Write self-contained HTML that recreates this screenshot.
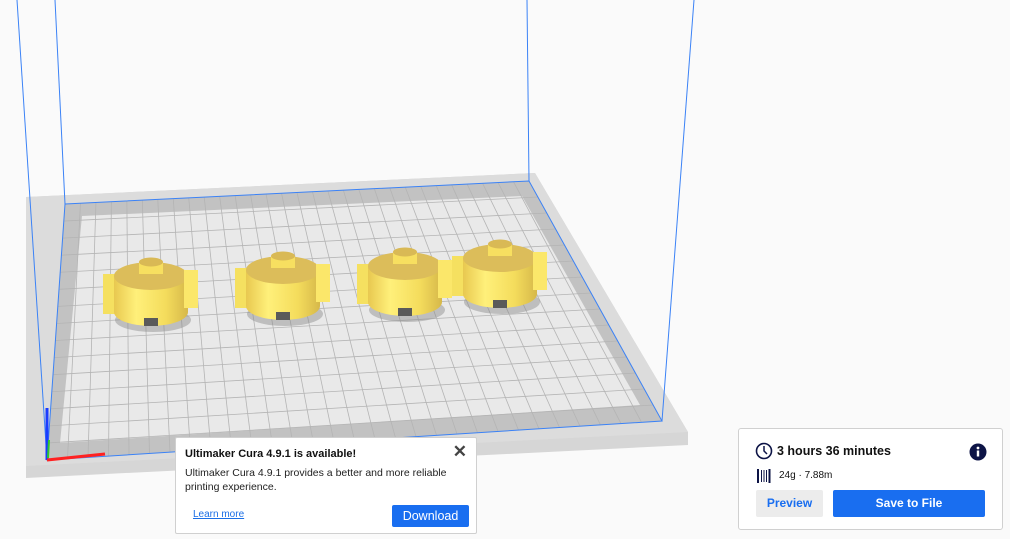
<!DOCTYPE html>
<html><head><meta charset="utf-8"><style>
html,body{margin:0;padding:0;width:1010px;height:539px;overflow:hidden;background:#fafafa;font-family:"Liberation Sans",sans-serif}
svg{position:absolute;left:0;top:0}
.pop{position:absolute;left:175px;top:437px;width:302px;height:97px;background:#fff;border:1px solid #d0d0d0;border-radius:2px;box-sizing:border-box}
.card{position:absolute;left:738px;top:428px;width:265px;height:102px;background:#fff;border:1px solid #d0d0d0;border-radius:3px;box-sizing:border-box}
</style></head><body>
<svg width="1010" height="539" viewBox="0 0 1010 539">
<defs>
<linearGradient id="yb" x1="0" x2="1"><stop offset="0" stop-color="#e8c850"/><stop offset="0.3" stop-color="#fff07a"/><stop offset="0.7" stop-color="#f4dc5c"/><stop offset="1" stop-color="#d6b84a"/></linearGradient>
<g id="obj">
<ellipse cx="2" cy="44" rx="38" ry="12" fill="#8a8a8a" opacity="0.45"/>
<rect x="-48" y="-2" width="15" height="40" fill="#f5e060"/>
<path d="M-37 0 L-37 36 A37 14 0 0 0 37 36 L37 0 Z" fill="url(#yb)"/>
<ellipse cx="0" cy="0" rx="37" ry="14" fill="#dcbd5a"/>
<rect x="33" y="-6" width="14" height="38" fill="#fbe76a"/>
<rect x="-12" y="-14" width="24" height="12" fill="#f7df60"/>
<ellipse cx="0" cy="-14" rx="12" ry="4.5" fill="#d9b955"/>
<rect x="-7" y="42" width="14" height="8" fill="#5a5a5a"/>
</g>
</defs>
<polygon points="26,197 535,173 688,432 688,445 26,478" fill="#d6d6d6"/>
<polygon points="26,197 535,173 688,432 26,466" fill="#dcdcdc"/>
<polygon points="65,204 529,181 662,421 47,460" fill="#c2c2c2"/>
<polygon points="82,216 522,196 640,405 60,443" fill="#e9e9e9"/>
<g id="grid" stroke="#b4b4b4" stroke-width="0.8"></g>
<polyline points="65,204 529,181 662,421 47,460 65,204" fill="none" stroke="#3b82f6" stroke-width="1"/>
<line x1="55" y1="0" x2="65" y2="204" stroke="#3b82f6"/>
<line x1="527" y1="0" x2="529" y2="181" stroke="#3b82f6"/>
<line x1="17" y1="0" x2="47" y2="460" stroke="#3b82f6"/>
<line x1="694" y1="0" x2="662" y2="421" stroke="#3b82f6"/>
<line x1="47" y1="460" x2="47" y2="408" stroke="#1a3cff" stroke-width="3"/>
<line x1="48" y1="458" x2="49" y2="440" stroke="#2ec82e" stroke-width="2"/>
<line x1="47" y1="460" x2="105" y2="454" stroke="#ff2020" stroke-width="3"/>
<use href="#obj" transform="translate(151,276)"/>
<use href="#obj" transform="translate(283,270)"/>
<use href="#obj" transform="translate(405,266)"/>
<use href="#obj" transform="translate(500,258)"/>
</svg>
<script>
(function(){var g=document.getElementById('grid');var TL=[65,204],TR=[529,181],BR=[662,421],BL=[47,460];
function P(u,v){var tx=TL[0]+(TR[0]-TL[0])*u,ty=TL[1]+(TR[1]-TL[1])*u,bx=BL[0]+(BR[0]-BL[0])*u,by=BL[1]+(BR[1]-BL[1])*u;return [tx+(bx-tx)*v,ty+(by-ty)*v];}
var s='';var nc=30,nr=15;for(var i=1;i<nc;i++){var a=P(i/nc,0),b=P(i/nc,1);s+='<line x1="'+a[0]+'" y1="'+a[1]+'" x2="'+b[0]+'" y2="'+b[1]+'"/>';}
for(var j=1;j<nr;j++){var a=P(0,j/nr),b=P(1,j/nr);s+='<line x1="'+a[0]+'" y1="'+a[1]+'" x2="'+b[0]+'" y2="'+b[1]+'"/>';}
g.innerHTML=s;})();
</script>
<div class="pop">
<div style="position:absolute;left:9px;top:10px;font-size:11px;font-weight:bold;color:#111">Ultimaker Cura 4.9.1 is available!</div>
<div style="position:absolute;right:9px;top:4px;font-size:17px;font-weight:bold;color:#444">✕</div>
<div style="position:absolute;left:9px;top:28px;font-size:10.5px;line-height:14px;color:#222;width:280px">Ultimaker Cura 4.9.1 provides a better and more reliable printing experience.</div>
<div style="position:absolute;left:17px;top:71px;font-size:10px;color:#1a6ee6;text-decoration:underline">Learn more</div>
<div style="position:absolute;left:216px;top:67px;width:77px;height:22px;background:#196ef0;border-radius:2px;color:#fff;font-size:12.5px;line-height:22px;text-align:center">Download</div>
</div>
<div class="card">
<svg width="18" height="18" style="left:16px;top:13px" viewBox="0 0 18 18"><circle cx="9" cy="9" r="7.5" fill="none" stroke="#0d1446" stroke-width="1.6"/><path d="M9 4V9L12 12" fill="none" stroke="#0d1446" stroke-width="1.5"/></svg>
<div style="position:absolute;left:38px;top:15px;font-size:12.5px;font-weight:bold;color:#111">3 hours 36 minutes</div>
<svg width="18" height="18" style="left:230px;top:14px" viewBox="0 0 18 18"><circle cx="9" cy="9" r="8.5" fill="#0d1446"/><rect x="7.8" y="7.5" width="2.4" height="6" fill="#fff"/><circle cx="9" cy="5" r="1.4" fill="#fff"/></svg>
<svg width="14" height="16" style="left:18px;top:39px" viewBox="0 0 14 16"><g stroke="#0d1446"><line x1="1" y1="1" x2="1" y2="15" stroke-width="2"/><line x1="4.5" y1="2" x2="4.5" y2="14"/><line x1="7" y1="2" x2="7" y2="14"/><line x1="9.5" y1="2" x2="9.5" y2="14"/><line x1="12.5" y1="1" x2="12.5" y2="15" stroke-width="2"/></g></svg>
<div style="position:absolute;left:40px;top:41px;font-size:10px;color:#111">24g · 7.88m</div>
<div style="position:absolute;left:17px;top:61px;width:67px;height:27px;background:#ececec;border-radius:2px;color:#196ef0;font-size:12px;font-weight:bold;line-height:27px;text-align:center">Preview</div>
<div style="position:absolute;left:94px;top:61px;width:152px;height:27px;background:#196ef0;border-radius:2px;color:#fff;font-size:12px;font-weight:bold;line-height:27px;text-align:center">Save to File</div>
</div>
</body></html>
